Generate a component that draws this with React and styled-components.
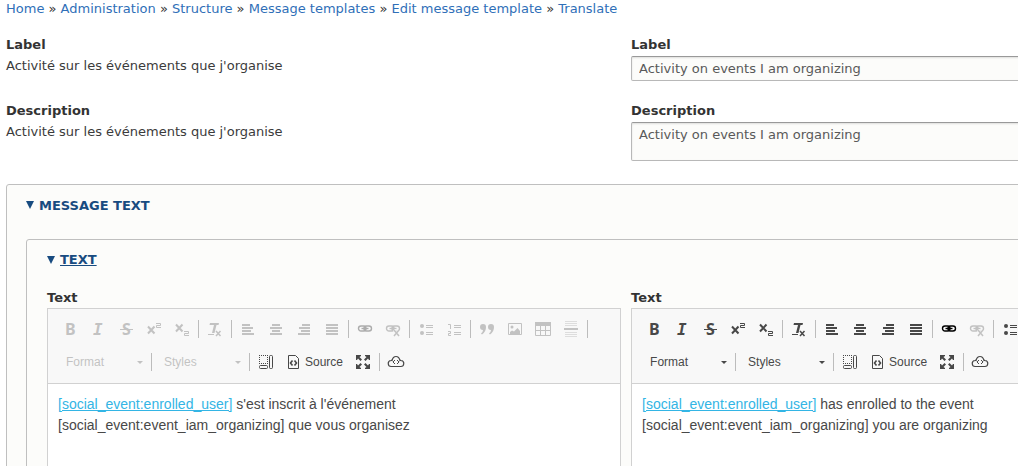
import React from "react";
import styled, { createGlobalStyle } from "styled-components";

const GlobalStyle = createGlobalStyle`
  body {
    margin: 0;
    overflow: hidden;
    background: #fff;
    color: #333;
    font: 13px/21px "DejaVu Sans", sans-serif;
  }

  * {
    box-sizing: border-box;
  }
`;

const Viewport = styled.div`
  height: 100vh;
  overflow: hidden;
`;

/* The form is wider than the window, its right side runs off screen. */
const Page = styled.main`
  width: 123%;
  padding: 0 6px;
`;

const Breadcrumb = styled.nav`
  height: 34px;
  line-height: 17px;

  a {
    color: #2f6fb8;
    text-decoration: none;
  }
`;

const Columns = styled.div`
  display: grid;
  grid-template-columns: 1fr 1fr;
  column-gap: 10px;
`;

const Field = styled.div`
  display: flex;
  flex-direction: column;
  margin-bottom: ${(props) => props.$gap || 0}px;
`;

const FieldLabel = styled.label`
  font-weight: bold;
`;

const SourceText = styled.span`
  color: #3b3b3b;
`;

const inputStyle = `
  width: 100%;
  margin: 1px 0 0;
  border: 1px solid #b8b8b8;
  border-top-color: #999;
  border-radius: 2px;
  background: #fcfcfa;
  box-shadow: inset 0 1px 2px rgba(0, 0, 0, 0.12);
  color: #595959;
  font: 13px/17px "DejaVu Sans", sans-serif;
`;

const TextInput = styled.input`
  ${inputStyle}
  height: 25px;
  padding: 3px 7px;
`;

const TextArea = styled.textarea`
  ${inputStyle}
  height: 39px;
  padding: 3px 7px;
  resize: none;
  overflow: hidden;
`;

const Fieldset = styled.details`
  border: 1px solid #bfbfbf;
  border-radius: 3px;
  background: #fcfcfa;
  padding: 0 ${(props) => props.$pad}px 20px;
`;

const Summary = styled.summary`
  display: flex;
  align-items: center;
  gap: 5px;
  height: ${(props) => props.$height}px;
  padding-bottom: ${(props) => props.$bottom}px;
  color: #184b80;
  font-weight: bold;
  list-style: none;
  text-transform: uppercase;
  cursor: pointer;

  span {
    text-decoration: ${(props) => (props.$underlined ? "underline" : "none")};
  }
`;

const Editor = styled.div`
  border: 1px solid #d1d1d1;
  background: #fff;
`;

const Toolbar = styled.div`
  display: flex;
  flex-direction: column;
  gap: 5px;
  padding: 6px 8px 7px;
  border-bottom: 1px solid #d1d1d1;
  background: #f8f8f8;
`;

const ToolRow = styled.div`
  display: flex;
  align-items: center;
  height: 28px;
`;

const ToolButton = styled.button`
  display: flex;
  align-items: center;
  justify-content: center;
  flex: none;
  gap: 3px;
  height: 28px;
  min-width: 28px;
  padding: 0 6px;
  border: 0;
  background: none;
  color: #484848;
  font: 12px/16px "Liberation Sans", Arial, sans-serif;

  svg {
    flex: none;
    overflow: visible;
  }

  &:disabled svg {
    opacity: 0.3;
  }
`;

const Separator = styled.span`
  flex: none;
  width: 1px;
  height: 18px;
  margin: 0 2px;
  background: #bcbcbc;
`;

const Combo = styled.label`
  display: flex;
  flex: none;
  align-items: center;
  width: 93px;
  padding: 0 6px 0 10px;
  color: #484848;
  opacity: ${(props) => (props.$disabled ? 0.3 : 1)};
`;

const ComboSelect = styled.select`
  flex: 1;
  min-width: 0;
  padding: 0;
  border: 0;
  appearance: none;
  background: none;
  color: #484848;
  opacity: 1;
  font: 12px/16px "Liberation Sans", Arial, sans-serif;
`;

const EditorBody = styled.div`
  min-height: 200px;
  padding: 10px;
  color: #484848;
  font: 14px/21px "Liberation Sans", Arial, sans-serif;

  p {
    margin: 0;
  }

  a {
    color: #33b5e5;
    text-decoration: underline;
  }
`;

const glyph = {
  fontFamily: "Noto Sans, sans-serif",
  fontWeight: "bold",
  fontSize: 16,
  fill: "currentColor",
};

const bars = (rows) =>
  rows.map(([x, w], i) => (
    <rect key={i} x={x} y={3 + i * 3} width={w} height="2" />
  ));

const chain = (
  <g fill="none" stroke="currentColor" strokeWidth="1.4">
    <rect x="1.500" y="5" width="7.500" height="5" rx="2.500" />
    <rect x="7" y="5" width="7.500" height="5" rx="2.500" />
    <path d="M4.500 7.500h7" />
  </g>
);

const icons = {
  bold: <text x="3" y="14" {...glyph}>B</text>,
  italic: (
    <text x="3" y="14" {...glyph} fontFamily="DejaVu Sans Mono" fontStyle="italic">I</text>
  ),
  strike: (
    <>
      <text x="4" y="14" {...glyph}>S</text>
      <path d="M2 8h13v1H2z" />
    </>
  ),
  superscript: (
    <>
      <path d="M2 5.500l6.500 7M8.500 5.500l-6.500 7" stroke="currentColor" strokeWidth="2" />
      <path d="M10 2.500h4.500v2h-4v2H15" fill="none" stroke="currentColor" />
    </>
  ),
  subscript: (
    <>
      <path d="M2 3.500l6.500 7M8.500 3.500l-6.500 7" stroke="currentColor" strokeWidth="2" />
      <path d="M10 10.500h4.500v2h-4v2H15" fill="none" stroke="currentColor" />
    </>
  ),
  removeFormat: (
    <>
      <path d="M3 2h9l-.5 2H9.500L7.500 12H5L7 4H2.500z" />
      <path d="M1 13h6v1H1z" />
      <path d="M9 10l4.500 5M13.500 10l-4.500 5" stroke="currentColor" strokeWidth="1.500" />
    </>
  ),
  left: bars([[2, 8], [2, 11], [2, 9], [2, 12]]),
  center: bars([[4, 8], [2, 12], [4, 8], [2, 12]]),
  right: bars([[6, 8], [3, 11], [5, 9], [2, 12]]),
  justify: bars([[2, 12], [2, 12], [2, 12], [2, 12]]),
  link: <g color="#000">{chain}</g>,
  unlink: (
    <>
      {chain}
      <path d="M9 9l5 6M14 9l-5 6" stroke="#f8f8f8" strokeWidth="3" />
      <path d="M9 9l5 6M14 9l-5 6" stroke="currentColor" strokeWidth="1.500" />
    </>
  ),
  bullets: (
    <>
      <circle cx="4" cy="5" r="2" />
      <circle cx="4" cy="12" r="2" />
      <path d="M8 4h7v1H8zM8 6h7v1H8zM8 11h7v1H8zM8 13h7v1H8z" />
    </>
  ),
  numbers: (
    <>
      <path d="M2 3.500h2.500V8M2 10.500h2.500v2h-2v2H5" fill="none" stroke="currentColor" />
      <path d="M8 4h7v1H8zM8 6h7v1H8zM8 11h7v1H8zM8 13h7v1H8z" />
    </>
  ),
  quote: (
    <>
      <path d="M1 6a3 3 0 0 1 6 0q0 5-4 7.500l-1-1Q4 11 4 9Q1 9 1 6z" />
      <path d="M9 6a3 3 0 0 1 6 0q0 5-4 7.500l-1-1Q12 11 12 9Q9 9 9 6z" />
    </>
  ),
  image: (
    <>
      <path d="M1.500 2.500h13v11h-13z" fill="none" stroke="currentColor" />
      <circle cx="5" cy="6" r="1.500" />
      <path d="M3 11l2-1.500 2 1L10.500 7 13 10v3H3z" />
    </>
  ),
  table: (
    <>
      <path d="M0 1h16v4H0z" />
      <path d="M.5 5v9.500h15V5M0 9.500h16M5.500 5v9M10.500 5v9" fill="none" stroke="currentColor" />
    </>
  ),
  rule: (
    <>
      <path d="M1 7h14v2H1z" />
      <path d="M2 0h12v1H2zM2 2h12v1H2zM2 4h12v1H2zM2 11h12v1H2zM2 13h12v1H2zM2 15h12v1H2z" opacity=".5" />
    </>
  ),
  blocks: (
    <g fill="none" stroke="currentColor">
      <path d="M1 1.500h10M1 9.500h10M1.500 1v9M9.500 1v9" strokeDasharray="1 1" />
      <rect x="1.500" y="11.500" width="8" height="3" rx="1" />
      <rect x="11.500" y="1.500" width="3" height="13" rx="1" />
    </g>
  ),
  source: (
    <g fill="none" stroke="currentColor">
      <path d="M2.500 1.500h7l3 3v10h-10z" />
      <path d="M6.500 6.500L4.500 9l2 2.500M8.500 6.500l2 2.500-2 2.500" strokeWidth="1.600" />
    </g>
  ),
  maximize: (
    <>
      <path d="M1 1h5v1L4.500 3 7 5.500 5.500 7 3 4.500 2 6H1z" />
      <path d="M15 1v5h-1l-1-1.500L10.500 7 9 5.500 11.500 3 10 2V1z" />
      <path d="M1 15v-5h1l1 1.500L5.500 9 7 10.500 4.500 13 6 14v1z" />
      <path d="M15 15h-5v-1l1.500-1L9 10.500 10.500 9l2.500 2.500 1-1.500h1z" />
    </>
  ),
  cloud: (
    <g fill="none" stroke="currentColor">
      <path d="M3.500 12.500a3 3 0 0 1-.5-6q.7-.2 1 0Q5 2.500 8 2.500t4 4q.3-.2 1 0a3 3 0 0 1-.5 6z" strokeWidth="1.200" />
      <path d="M7 6L5 8l2 2M9 6l2 2-2 2" />
    </g>
  ),
};

const Icon = ({ name }) => (
  <svg width="16" height="16" viewBox="0 0 16 16" fill="currentColor" aria-hidden="true">
    {icons[name]}
  </svg>
);

const Triangle = () => (
  <svg width="8" height="8" viewBox="0 0 8 8" fill="currentColor" aria-hidden="true">
    <path d="M0 0h8L4 8z" />
  </svg>
);

const groups = [
  ["bold", "italic", "strike", "superscript", "subscript"],
  ["removeFormat"],
  ["left", "center", "right", "justify"],
  ["link", "unlink"],
  ["bullets", "numbers"],
  ["quote", "image", "table", "rule"],
];

const FormatCombo = ({ name, disabled }) => (
  <Combo $disabled={disabled}>
    <ComboSelect aria-label={name} disabled={disabled}>
      <option>{name}</option>
    </ComboSelect>
    <svg width="6" height="3" viewBox="0 0 6 3" fill="currentColor" aria-hidden="true">
      <path d="M0 0h6L3 3z" />
    </svg>
  </Combo>
);

const RichEditor = ({ disabled, children }) => (
  <Editor>
    <Toolbar>
      <ToolRow>
        {groups.map((group) => (
          <React.Fragment key={group[0]}>
            {group.map((name) => (
              <ToolButton
                key={name}
                type="button"
                aria-label={name}
                disabled={disabled || name === "unlink"}
              >
                <Icon name={name} />
              </ToolButton>
            ))}
            <Separator />
          </React.Fragment>
        ))}
      </ToolRow>
      <ToolRow>
        <FormatCombo name="Format" disabled={disabled} />
        <Separator />
        <FormatCombo name="Styles" disabled={disabled} />
        <Separator />
        <ToolButton type="button" aria-label="blocks">
          <Icon name="blocks" />
        </ToolButton>
        <ToolButton type="button">
          <Icon name="source" />
          Source
        </ToolButton>
        <ToolButton type="button" aria-label="maximize">
          <Icon name="maximize" />
        </ToolButton>
        <Separator />
        <ToolButton type="button" aria-label="cloud">
          <Icon name="cloud" />
        </ToolButton>
      </ToolRow>
    </Toolbar>
    <EditorBody>
      <p>{children}</p>
    </EditorBody>
  </Editor>
);

const crumbs = [
  "Home",
  "Administration",
  "Structure",
  "Message templates",
  "Edit message template",
  "Translate",
];

const App = () => {
  return (
    <Viewport>
      <GlobalStyle />
      <Page>
        <Breadcrumb>
          {crumbs.map((crumb, i) => (
            <React.Fragment key={crumb}>
              {i > 0 && " » "}
              <a href="#">{crumb}</a>
            </React.Fragment>
          ))}
        </Breadcrumb>
        <Columns>
          <Field>
            <FieldLabel as="strong">Label</FieldLabel>
            <SourceText>Activité sur les événements que j'organise</SourceText>
          </Field>
          <Field $gap={19}>
            <FieldLabel htmlFor="label">Label</FieldLabel>
            <TextInput id="label" defaultValue="Activity on events I am organizing" />
          </Field>
          <Field>
            <FieldLabel as="strong">Description</FieldLabel>
            <SourceText>Activité sur les événements que j'organise</SourceText>
          </Field>
          <Field $gap={23}>
            <FieldLabel htmlFor="description">Description</FieldLabel>
            <TextArea id="description" defaultValue="Activity on events I am organizing" />
          </Field>
        </Columns>
        <Fieldset open $pad={19}>
          <Summary $height={54} $bottom={14}>
            <Triangle />
            <span>Message text</span>
          </Summary>
          <Fieldset open $pad={20}>
            <Summary $height={47} $bottom={8} $underlined>
              <Triangle />
              <span>Text</span>
            </Summary>
            <Columns>
              <Field>
                <FieldLabel as="strong">Text</FieldLabel>
                <RichEditor disabled>
                  <a href="#">[social_event:enrolled_user]</a> s'est inscrit à l'événement
                  <br />
                  [social_event:event_iam_organizing] que vous organisez
                </RichEditor>
              </Field>
              <Field>
                <FieldLabel as="strong">Text</FieldLabel>
                <RichEditor>
                  <a href="#">[social_event:enrolled_user]</a> has enrolled to the event
                  <br />
                  [social_event:event_iam_organizing] you are organizing
                </RichEditor>
              </Field>
            </Columns>
          </Fieldset>
        </Fieldset>
      </Page>
    </Viewport>
  );
};

export default App;
